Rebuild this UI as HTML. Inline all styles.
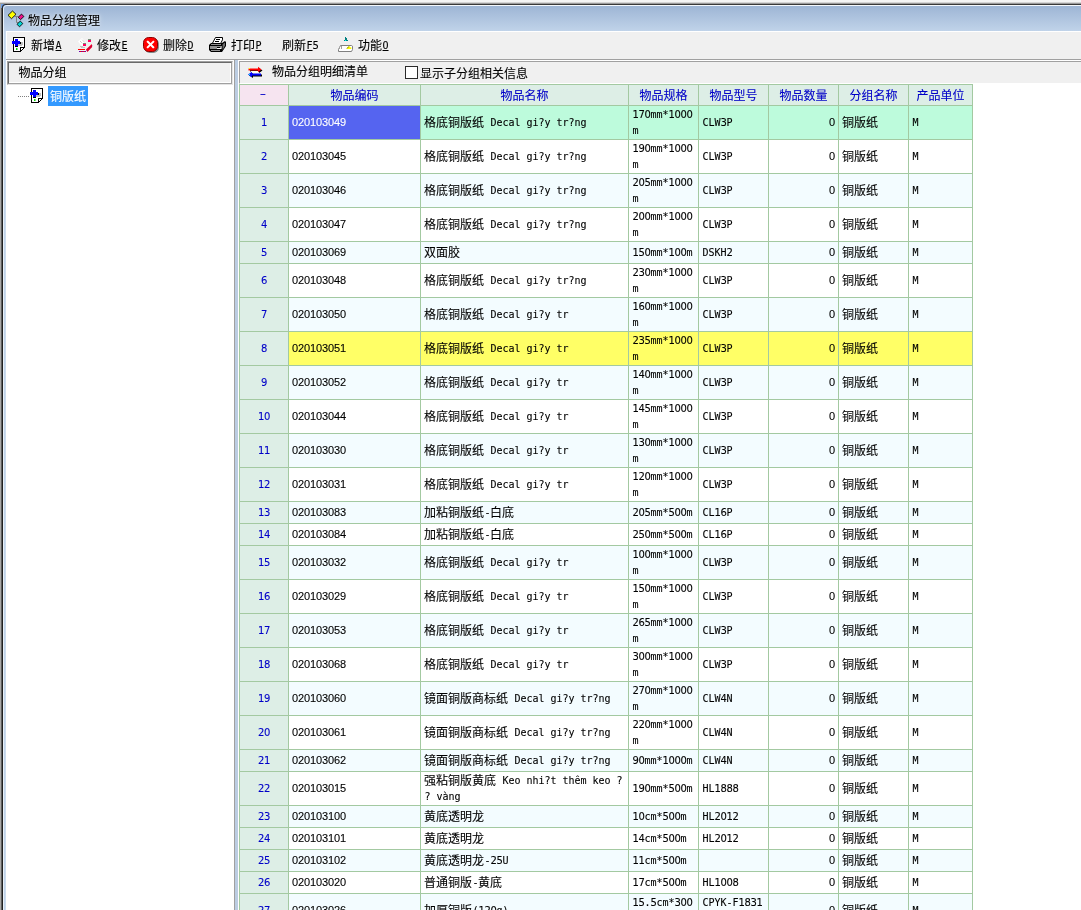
<!DOCTYPE html><html lang="zh"><head><meta charset="utf-8"><title>物品分组管理</title><style>
html,body{margin:0;padding:0}
body{width:1081px;height:910px;overflow:hidden;position:relative;background:#f0f0f0;
 font-family:"Liberation Mono","Noto Sans CJK SC",monospace;font-size:12px;line-height:14px;color:#000;-webkit-text-stroke:0.1px}
div,span{box-sizing:border-box}
#app{position:absolute;left:0;top:0;width:1081px;height:910px;overflow:hidden;will-change:transform}
.a{position:absolute}
.t{position:absolute;white-space:nowrap;font-size:12px;line-height:14px}
i{font-style:normal;font-family:"DejaVu Sans Mono",monospace;font-size:10px;letter-spacing:-0.02px;position:relative;top:-1px;left:0.5px;line-height:0}
i.d{font-family:"DejaVu Sans",sans-serif;letter-spacing:-0.36px}
.n{font-family:"Liberation Sans",sans-serif;font-size:11px;letter-spacing:-0.12px}
.c{position:absolute;overflow:hidden;white-space:nowrap}
.h{color:#0000c8;text-align:center}
.rn{color:#0000c8;text-align:center;padding-right:1px}
u{text-decoration:underline;text-decoration-thickness:1px;text-underline-offset:1px}
svg{position:absolute;overflow:visible}
</style></head><body><div id="app">
<div class="a" style="left:0;top:0;width:1081px;height:2px;background:#f4f4f4"></div>
<div class="a" style="left:0;top:2px;width:1081px;height:1px;background:#d4d4d4"></div>
<div class="a" style="left:0;top:3px;width:1081px;height:1px;background:#9a9a9a"></div>
<div class="a" style="left:0;top:4px;width:1px;height:906px;background:#a8a8a8"></div>
<div class="a" style="left:1px;top:4px;width:1080px;height:1px;background:#383838"></div>
<div class="a" style="left:1px;top:4px;width:1px;height:906px;background:#606060"></div>
<div class="a" style="left:2px;top:4px;width:1px;height:906px;background:#202020"></div>
<div class="a" style="left:3px;top:5px;width:1078px;height:26px;background:linear-gradient(#9cb4d4,#c0d3e9)"></div>
<div class="a" style="left:3px;top:5px;width:1078px;height:1px;background:#f4f8fc"></div>
<div class="a" style="left:3px;top:31px;width:3px;height:879px;background:linear-gradient(90deg,#dfe9f5,#bdd0e7 40%,#cfdff0)"></div>
<div class="a" style="left:3px;top:6px;width:1px;height:904px;background:#e8f0f8"></div>
<div class="t" style="left:28px;top:15px;text-shadow:0 0 3px rgba(255,255,255,.75),0 0 6px rgba(255,255,255,.5)">物品分组管理</div>
<div class="a" style="left:6px;top:31px;width:1075px;height:28px;background:#f0f0f0;border-top:1px solid #fff;border-left:1px solid #fff"></div>
<div class="a" style="left:6px;top:59px;width:1075px;height:1px;background:#a0a0a0"></div>
<div class="a" style="left:6px;top:60px;width:1075px;height:1px;background:#fff"></div>
<div class="t" style="left:31px;top:40px">新增<i><u>A</u></i></div>
<div class="t" style="left:97px;top:40px">修改<i><u>E</u></i></div>
<div class="t" style="left:163px;top:40px">删除<i><u>D</u></i></div>
<div class="t" style="left:231px;top:40px">打印<i><u>P</u></i></div>
<div class="t" style="left:282px;top:40px">刷新<i><u>F</u></i><i class="d">5</i></div>
<div class="t" style="left:358px;top:40px">功能<i><u>O</u></i></div>
<div class="a" style="left:6px;top:61px;width:228px;height:849px;background:#fff"></div>
<div class="a" style="left:7px;top:61px;width:226px;height:24px;background:#f0f0f0;border:1px solid #a0a0a0;border-right-color:#e4e4e4;border-bottom-color:#e4e4e4"><div class="a" style="left:0;top:0;right:0;bottom:0;border:1px solid #696969;border-right-color:#a0a0a0;border-bottom-color:#a0a0a0"><div class="a" style="left:0;top:0;right:0;bottom:0;border-right:1px solid #fff;border-bottom:1px solid #fff"></div></div></div>
<div class="t" style="left:18.5px;top:67px">物品分组</div>
<div class="a" style="left:48px;top:86px;width:40px;height:20px;background:#3399ff"></div>
<div class="t" style="left:50px;top:91px;color:#fff">铜版纸</div>
<div class="a" style="left:234px;top:60px;width:1px;height:850px;background:#a0a0a0"></div>
<div class="a" style="left:235px;top:60px;width:3px;height:850px;background:#bccde2"></div>
<div class="a" style="left:238px;top:61px;width:1px;height:849px;background:#fff"></div>
<div class="a" style="left:239px;top:61px;width:842px;height:23px;background:#f0f0f0;border-top:1px solid #a0a0a0;border-left:1px solid #a0a0a0;border-bottom:1px solid #fff"></div>
<div class="t" style="left:272px;top:66px">物品分组明细清单</div>
<div class="a" style="left:405px;top:66px;width:13px;height:13px;background:#fff;border:1px solid #2a2a2a"></div>
<div class="t" style="left:420px;top:68px">显示子分组相关信息</div>
<div class="a" style="left:239px;top:84px;width:842px;height:826px;background:#fff"></div>
<div class="a" style="left:239px;top:84px;width:734px;height:826px;background:#a3c9a1"></div>
<div class="c h" style="left:240px;top:85px;width:48px;height:20px;background:#f6e4f0;line-height:24px"><i style="display:inline-block;transform:scaleX(1.8);top:-3px;left:-1px">-</i></div>
<div class="c h" style="left:289px;top:85px;width:131px;height:20px;background:#ddeee6;line-height:24px">物品编码</div>
<div class="c h" style="left:421px;top:85px;width:207px;height:20px;background:#ddeee6;line-height:24px">物品名称</div>
<div class="c h" style="left:629px;top:85px;width:69px;height:20px;background:#ddeee6;line-height:24px">物品规格</div>
<div class="c h" style="left:699px;top:85px;width:69px;height:20px;background:#ddeee6;line-height:24px">物品型号</div>
<div class="c h" style="left:769px;top:85px;width:69px;height:20px;background:#ddeee6;line-height:24px">物品数量</div>
<div class="c h" style="left:839px;top:85px;width:69px;height:20px;background:#ddeee6;line-height:24px">分组名称</div>
<div class="c h" style="left:909px;top:85px;width:63px;height:20px;background:#ddeee6;line-height:24px">产品单位</div>
<div class="c rn" style="left:240px;top:106px;width:48px;height:33px;background:#ddeee6;line-height:37px"><i class="d">1</i></div>
<div class="c n" style="left:289px;top:106px;width:131px;height:33px;background:#5564f0;line-height:33px;padding-left:3px;color:#fff;">020103049</div>
<div class="c " style="left:421px;top:106px;width:207px;height:33px;background:#bdfbdc;line-height:37px;padding-left:3px;">格底铜版纸<i> Decal gi?y tr?ng</i></div>
<div class="c" style="left:629px;top:106px;width:69px;height:33px;background:#bdfbdc;line-height:16px;padding:2px 0 0 3px;white-space:normal"><i class="d">170</i><i>mm*</i><i class="d">1000</i><br><i>m</i></div>
<div class="c " style="left:699px;top:106px;width:69px;height:33px;background:#bdfbdc;line-height:37px;padding-left:3px;"><i>CLW</i><i class="d">3</i><i>P</i></div>
<div class="c n" style="left:769px;top:106px;width:69px;height:33px;background:#bdfbdc;line-height:33px;padding-left:3px;text-align:right;padding-right:3px;padding-left:0;">0</div>
<div class="c " style="left:839px;top:106px;width:69px;height:33px;background:#bdfbdc;line-height:37px;padding-left:3px;">铜版纸</div>
<div class="c " style="left:909px;top:106px;width:63px;height:33px;background:#bdfbdc;line-height:37px;padding-left:3px;"><i>M</i></div>
<div class="c rn" style="left:240px;top:140px;width:48px;height:33px;background:#ddeee6;line-height:37px"><i class="d">2</i></div>
<div class="c n" style="left:289px;top:140px;width:131px;height:33px;background:#ffffff;line-height:33px;padding-left:3px;">020103045</div>
<div class="c " style="left:421px;top:140px;width:207px;height:33px;background:#ffffff;line-height:37px;padding-left:3px;">格底铜版纸<i> Decal gi?y tr?ng</i></div>
<div class="c" style="left:629px;top:140px;width:69px;height:33px;background:#ffffff;line-height:16px;padding:2px 0 0 3px;white-space:normal"><i class="d">190</i><i>mm*</i><i class="d">1000</i><br><i>m</i></div>
<div class="c " style="left:699px;top:140px;width:69px;height:33px;background:#ffffff;line-height:37px;padding-left:3px;"><i>CLW</i><i class="d">3</i><i>P</i></div>
<div class="c n" style="left:769px;top:140px;width:69px;height:33px;background:#ffffff;line-height:33px;padding-left:3px;text-align:right;padding-right:3px;padding-left:0;">0</div>
<div class="c " style="left:839px;top:140px;width:69px;height:33px;background:#ffffff;line-height:37px;padding-left:3px;">铜版纸</div>
<div class="c " style="left:909px;top:140px;width:63px;height:33px;background:#ffffff;line-height:37px;padding-left:3px;"><i>M</i></div>
<div class="c rn" style="left:240px;top:174px;width:48px;height:33px;background:#ddeee6;line-height:37px"><i class="d">3</i></div>
<div class="c n" style="left:289px;top:174px;width:131px;height:33px;background:#f3fcff;line-height:33px;padding-left:3px;">020103046</div>
<div class="c " style="left:421px;top:174px;width:207px;height:33px;background:#f3fcff;line-height:37px;padding-left:3px;">格底铜版纸<i> Decal gi?y tr?ng</i></div>
<div class="c" style="left:629px;top:174px;width:69px;height:33px;background:#f3fcff;line-height:16px;padding:2px 0 0 3px;white-space:normal"><i class="d">205</i><i>mm*</i><i class="d">1000</i><br><i>m</i></div>
<div class="c " style="left:699px;top:174px;width:69px;height:33px;background:#f3fcff;line-height:37px;padding-left:3px;"><i>CLW</i><i class="d">3</i><i>P</i></div>
<div class="c n" style="left:769px;top:174px;width:69px;height:33px;background:#f3fcff;line-height:33px;padding-left:3px;text-align:right;padding-right:3px;padding-left:0;">0</div>
<div class="c " style="left:839px;top:174px;width:69px;height:33px;background:#f3fcff;line-height:37px;padding-left:3px;">铜版纸</div>
<div class="c " style="left:909px;top:174px;width:63px;height:33px;background:#f3fcff;line-height:37px;padding-left:3px;"><i>M</i></div>
<div class="c rn" style="left:240px;top:208px;width:48px;height:33px;background:#ddeee6;line-height:37px"><i class="d">4</i></div>
<div class="c n" style="left:289px;top:208px;width:131px;height:33px;background:#ffffff;line-height:33px;padding-left:3px;">020103047</div>
<div class="c " style="left:421px;top:208px;width:207px;height:33px;background:#ffffff;line-height:37px;padding-left:3px;">格底铜版纸<i> Decal gi?y tr?ng</i></div>
<div class="c" style="left:629px;top:208px;width:69px;height:33px;background:#ffffff;line-height:16px;padding:2px 0 0 3px;white-space:normal"><i class="d">200</i><i>mm*</i><i class="d">1000</i><br><i>m</i></div>
<div class="c " style="left:699px;top:208px;width:69px;height:33px;background:#ffffff;line-height:37px;padding-left:3px;"><i>CLW</i><i class="d">3</i><i>P</i></div>
<div class="c n" style="left:769px;top:208px;width:69px;height:33px;background:#ffffff;line-height:33px;padding-left:3px;text-align:right;padding-right:3px;padding-left:0;">0</div>
<div class="c " style="left:839px;top:208px;width:69px;height:33px;background:#ffffff;line-height:37px;padding-left:3px;">铜版纸</div>
<div class="c " style="left:909px;top:208px;width:63px;height:33px;background:#ffffff;line-height:37px;padding-left:3px;"><i>M</i></div>
<div class="c rn" style="left:240px;top:242px;width:48px;height:21px;background:#ddeee6;line-height:25px"><i class="d">5</i></div>
<div class="c n" style="left:289px;top:242px;width:131px;height:21px;background:#f3fcff;line-height:21px;padding-left:3px;">020103069</div>
<div class="c " style="left:421px;top:242px;width:207px;height:21px;background:#f3fcff;line-height:25px;padding-left:3px;">双面胶</div>
<div class="c " style="left:629px;top:242px;width:69px;height:21px;background:#f3fcff;line-height:25px;padding-left:3px;"><i class="d">150</i><i>mm*</i><i class="d">100</i><i>m</i></div>
<div class="c " style="left:699px;top:242px;width:69px;height:21px;background:#f3fcff;line-height:25px;padding-left:3px;"><i>DSKH</i><i class="d">2</i></div>
<div class="c n" style="left:769px;top:242px;width:69px;height:21px;background:#f3fcff;line-height:21px;padding-left:3px;text-align:right;padding-right:3px;padding-left:0;">0</div>
<div class="c " style="left:839px;top:242px;width:69px;height:21px;background:#f3fcff;line-height:25px;padding-left:3px;">铜版纸</div>
<div class="c " style="left:909px;top:242px;width:63px;height:21px;background:#f3fcff;line-height:25px;padding-left:3px;"><i>M</i></div>
<div class="c rn" style="left:240px;top:264px;width:48px;height:33px;background:#ddeee6;line-height:37px"><i class="d">6</i></div>
<div class="c n" style="left:289px;top:264px;width:131px;height:33px;background:#ffffff;line-height:33px;padding-left:3px;">020103048</div>
<div class="c " style="left:421px;top:264px;width:207px;height:33px;background:#ffffff;line-height:37px;padding-left:3px;">格底铜版纸<i> Decal gi?y tr?ng</i></div>
<div class="c" style="left:629px;top:264px;width:69px;height:33px;background:#ffffff;line-height:16px;padding:2px 0 0 3px;white-space:normal"><i class="d">230</i><i>mm*</i><i class="d">1000</i><br><i>m</i></div>
<div class="c " style="left:699px;top:264px;width:69px;height:33px;background:#ffffff;line-height:37px;padding-left:3px;"><i>CLW</i><i class="d">3</i><i>P</i></div>
<div class="c n" style="left:769px;top:264px;width:69px;height:33px;background:#ffffff;line-height:33px;padding-left:3px;text-align:right;padding-right:3px;padding-left:0;">0</div>
<div class="c " style="left:839px;top:264px;width:69px;height:33px;background:#ffffff;line-height:37px;padding-left:3px;">铜版纸</div>
<div class="c " style="left:909px;top:264px;width:63px;height:33px;background:#ffffff;line-height:37px;padding-left:3px;"><i>M</i></div>
<div class="c rn" style="left:240px;top:298px;width:48px;height:33px;background:#ddeee6;line-height:37px"><i class="d">7</i></div>
<div class="c n" style="left:289px;top:298px;width:131px;height:33px;background:#f3fcff;line-height:33px;padding-left:3px;">020103050</div>
<div class="c " style="left:421px;top:298px;width:207px;height:33px;background:#f3fcff;line-height:37px;padding-left:3px;">格底铜版纸<i> Decal gi?y tr</i></div>
<div class="c" style="left:629px;top:298px;width:69px;height:33px;background:#f3fcff;line-height:16px;padding:2px 0 0 3px;white-space:normal"><i class="d">160</i><i>mm*</i><i class="d">1000</i><br><i>m</i></div>
<div class="c " style="left:699px;top:298px;width:69px;height:33px;background:#f3fcff;line-height:37px;padding-left:3px;"><i>CLW</i><i class="d">3</i><i>P</i></div>
<div class="c n" style="left:769px;top:298px;width:69px;height:33px;background:#f3fcff;line-height:33px;padding-left:3px;text-align:right;padding-right:3px;padding-left:0;">0</div>
<div class="c " style="left:839px;top:298px;width:69px;height:33px;background:#f3fcff;line-height:37px;padding-left:3px;">铜版纸</div>
<div class="c " style="left:909px;top:298px;width:63px;height:33px;background:#f3fcff;line-height:37px;padding-left:3px;"><i>M</i></div>
<div class="c rn" style="left:240px;top:332px;width:48px;height:33px;background:#ddeee6;line-height:37px"><i class="d">8</i></div>
<div class="c n" style="left:289px;top:332px;width:131px;height:33px;background:#ffff66;line-height:33px;padding-left:3px;">020103051</div>
<div class="c " style="left:421px;top:332px;width:207px;height:33px;background:#ffff66;line-height:37px;padding-left:3px;">格底铜版纸<i> Decal gi?y tr</i></div>
<div class="c" style="left:629px;top:332px;width:69px;height:33px;background:#ffff66;line-height:16px;padding:2px 0 0 3px;white-space:normal"><i class="d">235</i><i>mm*</i><i class="d">1000</i><br><i>m</i></div>
<div class="c " style="left:699px;top:332px;width:69px;height:33px;background:#ffff66;line-height:37px;padding-left:3px;"><i>CLW</i><i class="d">3</i><i>P</i></div>
<div class="c n" style="left:769px;top:332px;width:69px;height:33px;background:#ffff66;line-height:33px;padding-left:3px;text-align:right;padding-right:3px;padding-left:0;">0</div>
<div class="c " style="left:839px;top:332px;width:69px;height:33px;background:#ffff66;line-height:37px;padding-left:3px;">铜版纸</div>
<div class="c " style="left:909px;top:332px;width:63px;height:33px;background:#ffff66;line-height:37px;padding-left:3px;"><i>M</i></div>
<div class="c rn" style="left:240px;top:366px;width:48px;height:33px;background:#ddeee6;line-height:37px"><i class="d">9</i></div>
<div class="c n" style="left:289px;top:366px;width:131px;height:33px;background:#f3fcff;line-height:33px;padding-left:3px;">020103052</div>
<div class="c " style="left:421px;top:366px;width:207px;height:33px;background:#f3fcff;line-height:37px;padding-left:3px;">格底铜版纸<i> Decal gi?y tr</i></div>
<div class="c" style="left:629px;top:366px;width:69px;height:33px;background:#f3fcff;line-height:16px;padding:2px 0 0 3px;white-space:normal"><i class="d">140</i><i>mm*</i><i class="d">1000</i><br><i>m</i></div>
<div class="c " style="left:699px;top:366px;width:69px;height:33px;background:#f3fcff;line-height:37px;padding-left:3px;"><i>CLW</i><i class="d">3</i><i>P</i></div>
<div class="c n" style="left:769px;top:366px;width:69px;height:33px;background:#f3fcff;line-height:33px;padding-left:3px;text-align:right;padding-right:3px;padding-left:0;">0</div>
<div class="c " style="left:839px;top:366px;width:69px;height:33px;background:#f3fcff;line-height:37px;padding-left:3px;">铜版纸</div>
<div class="c " style="left:909px;top:366px;width:63px;height:33px;background:#f3fcff;line-height:37px;padding-left:3px;"><i>M</i></div>
<div class="c rn" style="left:240px;top:400px;width:48px;height:33px;background:#ddeee6;line-height:37px"><i class="d">10</i></div>
<div class="c n" style="left:289px;top:400px;width:131px;height:33px;background:#ffffff;line-height:33px;padding-left:3px;">020103044</div>
<div class="c " style="left:421px;top:400px;width:207px;height:33px;background:#ffffff;line-height:37px;padding-left:3px;">格底铜版纸<i> Decal gi?y tr</i></div>
<div class="c" style="left:629px;top:400px;width:69px;height:33px;background:#ffffff;line-height:16px;padding:2px 0 0 3px;white-space:normal"><i class="d">145</i><i>mm*</i><i class="d">1000</i><br><i>m</i></div>
<div class="c " style="left:699px;top:400px;width:69px;height:33px;background:#ffffff;line-height:37px;padding-left:3px;"><i>CLW</i><i class="d">3</i><i>P</i></div>
<div class="c n" style="left:769px;top:400px;width:69px;height:33px;background:#ffffff;line-height:33px;padding-left:3px;text-align:right;padding-right:3px;padding-left:0;">0</div>
<div class="c " style="left:839px;top:400px;width:69px;height:33px;background:#ffffff;line-height:37px;padding-left:3px;">铜版纸</div>
<div class="c " style="left:909px;top:400px;width:63px;height:33px;background:#ffffff;line-height:37px;padding-left:3px;"><i>M</i></div>
<div class="c rn" style="left:240px;top:434px;width:48px;height:33px;background:#ddeee6;line-height:37px"><i class="d">11</i></div>
<div class="c n" style="left:289px;top:434px;width:131px;height:33px;background:#f3fcff;line-height:33px;padding-left:3px;">020103030</div>
<div class="c " style="left:421px;top:434px;width:207px;height:33px;background:#f3fcff;line-height:37px;padding-left:3px;">格底铜版纸<i> Decal gi?y tr</i></div>
<div class="c" style="left:629px;top:434px;width:69px;height:33px;background:#f3fcff;line-height:16px;padding:2px 0 0 3px;white-space:normal"><i class="d">130</i><i>mm*</i><i class="d">1000</i><br><i>m</i></div>
<div class="c " style="left:699px;top:434px;width:69px;height:33px;background:#f3fcff;line-height:37px;padding-left:3px;"><i>CLW</i><i class="d">3</i><i>P</i></div>
<div class="c n" style="left:769px;top:434px;width:69px;height:33px;background:#f3fcff;line-height:33px;padding-left:3px;text-align:right;padding-right:3px;padding-left:0;">0</div>
<div class="c " style="left:839px;top:434px;width:69px;height:33px;background:#f3fcff;line-height:37px;padding-left:3px;">铜版纸</div>
<div class="c " style="left:909px;top:434px;width:63px;height:33px;background:#f3fcff;line-height:37px;padding-left:3px;"><i>M</i></div>
<div class="c rn" style="left:240px;top:468px;width:48px;height:33px;background:#ddeee6;line-height:37px"><i class="d">12</i></div>
<div class="c n" style="left:289px;top:468px;width:131px;height:33px;background:#ffffff;line-height:33px;padding-left:3px;">020103031</div>
<div class="c " style="left:421px;top:468px;width:207px;height:33px;background:#ffffff;line-height:37px;padding-left:3px;">格底铜版纸<i> Decal gi?y tr</i></div>
<div class="c" style="left:629px;top:468px;width:69px;height:33px;background:#ffffff;line-height:16px;padding:2px 0 0 3px;white-space:normal"><i class="d">120</i><i>mm*</i><i class="d">1000</i><br><i>m</i></div>
<div class="c " style="left:699px;top:468px;width:69px;height:33px;background:#ffffff;line-height:37px;padding-left:3px;"><i>CLW</i><i class="d">3</i><i>P</i></div>
<div class="c n" style="left:769px;top:468px;width:69px;height:33px;background:#ffffff;line-height:33px;padding-left:3px;text-align:right;padding-right:3px;padding-left:0;">0</div>
<div class="c " style="left:839px;top:468px;width:69px;height:33px;background:#ffffff;line-height:37px;padding-left:3px;">铜版纸</div>
<div class="c " style="left:909px;top:468px;width:63px;height:33px;background:#ffffff;line-height:37px;padding-left:3px;"><i>M</i></div>
<div class="c rn" style="left:240px;top:502px;width:48px;height:21px;background:#ddeee6;line-height:25px"><i class="d">13</i></div>
<div class="c n" style="left:289px;top:502px;width:131px;height:21px;background:#f3fcff;line-height:21px;padding-left:3px;">020103083</div>
<div class="c " style="left:421px;top:502px;width:207px;height:21px;background:#f3fcff;line-height:25px;padding-left:3px;">加粘铜版纸<i>-</i>白底</div>
<div class="c " style="left:629px;top:502px;width:69px;height:21px;background:#f3fcff;line-height:25px;padding-left:3px;"><i class="d">205</i><i>mm*</i><i class="d">500</i><i>m</i></div>
<div class="c " style="left:699px;top:502px;width:69px;height:21px;background:#f3fcff;line-height:25px;padding-left:3px;"><i>CL</i><i class="d">16</i><i>P</i></div>
<div class="c n" style="left:769px;top:502px;width:69px;height:21px;background:#f3fcff;line-height:21px;padding-left:3px;text-align:right;padding-right:3px;padding-left:0;">0</div>
<div class="c " style="left:839px;top:502px;width:69px;height:21px;background:#f3fcff;line-height:25px;padding-left:3px;">铜版纸</div>
<div class="c " style="left:909px;top:502px;width:63px;height:21px;background:#f3fcff;line-height:25px;padding-left:3px;"><i>M</i></div>
<div class="c rn" style="left:240px;top:524px;width:48px;height:21px;background:#ddeee6;line-height:25px"><i class="d">14</i></div>
<div class="c n" style="left:289px;top:524px;width:131px;height:21px;background:#ffffff;line-height:21px;padding-left:3px;">020103084</div>
<div class="c " style="left:421px;top:524px;width:207px;height:21px;background:#ffffff;line-height:25px;padding-left:3px;">加粘铜版纸<i>-</i>白底</div>
<div class="c " style="left:629px;top:524px;width:69px;height:21px;background:#ffffff;line-height:25px;padding-left:3px;"><i class="d">250</i><i>mm*</i><i class="d">500</i><i>m</i></div>
<div class="c " style="left:699px;top:524px;width:69px;height:21px;background:#ffffff;line-height:25px;padding-left:3px;"><i>CL</i><i class="d">16</i><i>P</i></div>
<div class="c n" style="left:769px;top:524px;width:69px;height:21px;background:#ffffff;line-height:21px;padding-left:3px;text-align:right;padding-right:3px;padding-left:0;">0</div>
<div class="c " style="left:839px;top:524px;width:69px;height:21px;background:#ffffff;line-height:25px;padding-left:3px;">铜版纸</div>
<div class="c " style="left:909px;top:524px;width:63px;height:21px;background:#ffffff;line-height:25px;padding-left:3px;"><i>M</i></div>
<div class="c rn" style="left:240px;top:546px;width:48px;height:33px;background:#ddeee6;line-height:37px"><i class="d">15</i></div>
<div class="c n" style="left:289px;top:546px;width:131px;height:33px;background:#f3fcff;line-height:33px;padding-left:3px;">020103032</div>
<div class="c " style="left:421px;top:546px;width:207px;height:33px;background:#f3fcff;line-height:37px;padding-left:3px;">格底铜版纸<i> Decal gi?y tr</i></div>
<div class="c" style="left:629px;top:546px;width:69px;height:33px;background:#f3fcff;line-height:16px;padding:2px 0 0 3px;white-space:normal"><i class="d">100</i><i>mm*</i><i class="d">1000</i><br><i>m</i></div>
<div class="c " style="left:699px;top:546px;width:69px;height:33px;background:#f3fcff;line-height:37px;padding-left:3px;"><i>CLW</i><i class="d">3</i><i>P</i></div>
<div class="c n" style="left:769px;top:546px;width:69px;height:33px;background:#f3fcff;line-height:33px;padding-left:3px;text-align:right;padding-right:3px;padding-left:0;">0</div>
<div class="c " style="left:839px;top:546px;width:69px;height:33px;background:#f3fcff;line-height:37px;padding-left:3px;">铜版纸</div>
<div class="c " style="left:909px;top:546px;width:63px;height:33px;background:#f3fcff;line-height:37px;padding-left:3px;"><i>M</i></div>
<div class="c rn" style="left:240px;top:580px;width:48px;height:33px;background:#ddeee6;line-height:37px"><i class="d">16</i></div>
<div class="c n" style="left:289px;top:580px;width:131px;height:33px;background:#ffffff;line-height:33px;padding-left:3px;">020103029</div>
<div class="c " style="left:421px;top:580px;width:207px;height:33px;background:#ffffff;line-height:37px;padding-left:3px;">格底铜版纸<i> Decal gi?y tr</i></div>
<div class="c" style="left:629px;top:580px;width:69px;height:33px;background:#ffffff;line-height:16px;padding:2px 0 0 3px;white-space:normal"><i class="d">150</i><i>mm*</i><i class="d">1000</i><br><i>m</i></div>
<div class="c " style="left:699px;top:580px;width:69px;height:33px;background:#ffffff;line-height:37px;padding-left:3px;"><i>CLW</i><i class="d">3</i><i>P</i></div>
<div class="c n" style="left:769px;top:580px;width:69px;height:33px;background:#ffffff;line-height:33px;padding-left:3px;text-align:right;padding-right:3px;padding-left:0;">0</div>
<div class="c " style="left:839px;top:580px;width:69px;height:33px;background:#ffffff;line-height:37px;padding-left:3px;">铜版纸</div>
<div class="c " style="left:909px;top:580px;width:63px;height:33px;background:#ffffff;line-height:37px;padding-left:3px;"><i>M</i></div>
<div class="c rn" style="left:240px;top:614px;width:48px;height:33px;background:#ddeee6;line-height:37px"><i class="d">17</i></div>
<div class="c n" style="left:289px;top:614px;width:131px;height:33px;background:#f3fcff;line-height:33px;padding-left:3px;">020103053</div>
<div class="c " style="left:421px;top:614px;width:207px;height:33px;background:#f3fcff;line-height:37px;padding-left:3px;">格底铜版纸<i> Decal gi?y tr</i></div>
<div class="c" style="left:629px;top:614px;width:69px;height:33px;background:#f3fcff;line-height:16px;padding:2px 0 0 3px;white-space:normal"><i class="d">265</i><i>mm*</i><i class="d">1000</i><br><i>m</i></div>
<div class="c " style="left:699px;top:614px;width:69px;height:33px;background:#f3fcff;line-height:37px;padding-left:3px;"><i>CLW</i><i class="d">3</i><i>P</i></div>
<div class="c n" style="left:769px;top:614px;width:69px;height:33px;background:#f3fcff;line-height:33px;padding-left:3px;text-align:right;padding-right:3px;padding-left:0;">0</div>
<div class="c " style="left:839px;top:614px;width:69px;height:33px;background:#f3fcff;line-height:37px;padding-left:3px;">铜版纸</div>
<div class="c " style="left:909px;top:614px;width:63px;height:33px;background:#f3fcff;line-height:37px;padding-left:3px;"><i>M</i></div>
<div class="c rn" style="left:240px;top:648px;width:48px;height:33px;background:#ddeee6;line-height:37px"><i class="d">18</i></div>
<div class="c n" style="left:289px;top:648px;width:131px;height:33px;background:#ffffff;line-height:33px;padding-left:3px;">020103068</div>
<div class="c " style="left:421px;top:648px;width:207px;height:33px;background:#ffffff;line-height:37px;padding-left:3px;">格底铜版纸<i> Decal gi?y tr</i></div>
<div class="c" style="left:629px;top:648px;width:69px;height:33px;background:#ffffff;line-height:16px;padding:2px 0 0 3px;white-space:normal"><i class="d">300</i><i>mm*</i><i class="d">1000</i><br><i>m</i></div>
<div class="c " style="left:699px;top:648px;width:69px;height:33px;background:#ffffff;line-height:37px;padding-left:3px;"><i>CLW</i><i class="d">3</i><i>P</i></div>
<div class="c n" style="left:769px;top:648px;width:69px;height:33px;background:#ffffff;line-height:33px;padding-left:3px;text-align:right;padding-right:3px;padding-left:0;">0</div>
<div class="c " style="left:839px;top:648px;width:69px;height:33px;background:#ffffff;line-height:37px;padding-left:3px;">铜版纸</div>
<div class="c " style="left:909px;top:648px;width:63px;height:33px;background:#ffffff;line-height:37px;padding-left:3px;"><i>M</i></div>
<div class="c rn" style="left:240px;top:682px;width:48px;height:33px;background:#ddeee6;line-height:37px"><i class="d">19</i></div>
<div class="c n" style="left:289px;top:682px;width:131px;height:33px;background:#f3fcff;line-height:33px;padding-left:3px;">020103060</div>
<div class="c " style="left:421px;top:682px;width:207px;height:33px;background:#f3fcff;line-height:37px;padding-left:3px;">镜面铜版商标纸<i> Decal gi?y tr?ng</i></div>
<div class="c" style="left:629px;top:682px;width:69px;height:33px;background:#f3fcff;line-height:16px;padding:2px 0 0 3px;white-space:normal"><i class="d">270</i><i>mm*</i><i class="d">1000</i><br><i>m</i></div>
<div class="c " style="left:699px;top:682px;width:69px;height:33px;background:#f3fcff;line-height:37px;padding-left:3px;"><i>CLW</i><i class="d">4</i><i>N</i></div>
<div class="c n" style="left:769px;top:682px;width:69px;height:33px;background:#f3fcff;line-height:33px;padding-left:3px;text-align:right;padding-right:3px;padding-left:0;">0</div>
<div class="c " style="left:839px;top:682px;width:69px;height:33px;background:#f3fcff;line-height:37px;padding-left:3px;">铜版纸</div>
<div class="c " style="left:909px;top:682px;width:63px;height:33px;background:#f3fcff;line-height:37px;padding-left:3px;"><i>M</i></div>
<div class="c rn" style="left:240px;top:716px;width:48px;height:33px;background:#ddeee6;line-height:37px"><i class="d">20</i></div>
<div class="c n" style="left:289px;top:716px;width:131px;height:33px;background:#ffffff;line-height:33px;padding-left:3px;">020103061</div>
<div class="c " style="left:421px;top:716px;width:207px;height:33px;background:#ffffff;line-height:37px;padding-left:3px;">镜面铜版商标纸<i> Decal gi?y tr?ng</i></div>
<div class="c" style="left:629px;top:716px;width:69px;height:33px;background:#ffffff;line-height:16px;padding:2px 0 0 3px;white-space:normal"><i class="d">220</i><i>mm*</i><i class="d">1000</i><br><i>m</i></div>
<div class="c " style="left:699px;top:716px;width:69px;height:33px;background:#ffffff;line-height:37px;padding-left:3px;"><i>CLW</i><i class="d">4</i><i>N</i></div>
<div class="c n" style="left:769px;top:716px;width:69px;height:33px;background:#ffffff;line-height:33px;padding-left:3px;text-align:right;padding-right:3px;padding-left:0;">0</div>
<div class="c " style="left:839px;top:716px;width:69px;height:33px;background:#ffffff;line-height:37px;padding-left:3px;">铜版纸</div>
<div class="c " style="left:909px;top:716px;width:63px;height:33px;background:#ffffff;line-height:37px;padding-left:3px;"><i>M</i></div>
<div class="c rn" style="left:240px;top:750px;width:48px;height:21px;background:#ddeee6;line-height:25px"><i class="d">21</i></div>
<div class="c n" style="left:289px;top:750px;width:131px;height:21px;background:#f3fcff;line-height:21px;padding-left:3px;">020103062</div>
<div class="c " style="left:421px;top:750px;width:207px;height:21px;background:#f3fcff;line-height:25px;padding-left:3px;">镜面铜版商标纸<i> Decal gi?y tr?ng</i></div>
<div class="c " style="left:629px;top:750px;width:69px;height:21px;background:#f3fcff;line-height:25px;padding-left:3px;"><i class="d">90</i><i>mm*</i><i class="d">1000</i><i>m</i></div>
<div class="c " style="left:699px;top:750px;width:69px;height:21px;background:#f3fcff;line-height:25px;padding-left:3px;"><i>CLW</i><i class="d">4</i><i>N</i></div>
<div class="c n" style="left:769px;top:750px;width:69px;height:21px;background:#f3fcff;line-height:21px;padding-left:3px;text-align:right;padding-right:3px;padding-left:0;">0</div>
<div class="c " style="left:839px;top:750px;width:69px;height:21px;background:#f3fcff;line-height:25px;padding-left:3px;">铜版纸</div>
<div class="c " style="left:909px;top:750px;width:63px;height:21px;background:#f3fcff;line-height:25px;padding-left:3px;"><i>M</i></div>
<div class="c rn" style="left:240px;top:772px;width:48px;height:33px;background:#ddeee6;line-height:37px"><i class="d">22</i></div>
<div class="c n" style="left:289px;top:772px;width:131px;height:33px;background:#ffffff;line-height:33px;padding-left:3px;">020103015</div>
<div class="c" style="left:421px;top:772px;width:207px;height:33px;background:#ffffff;line-height:16px;padding:2px 0 0 3px;white-space:normal">强粘铜版黄底<i> Keo nhi?t thêm keo ?</i><br><i>? vàng</i></div>
<div class="c " style="left:629px;top:772px;width:69px;height:33px;background:#ffffff;line-height:37px;padding-left:3px;"><i class="d">190</i><i>mm*</i><i class="d">500</i><i>m</i></div>
<div class="c " style="left:699px;top:772px;width:69px;height:33px;background:#ffffff;line-height:37px;padding-left:3px;"><i>HL</i><i class="d">1888</i></div>
<div class="c n" style="left:769px;top:772px;width:69px;height:33px;background:#ffffff;line-height:33px;padding-left:3px;text-align:right;padding-right:3px;padding-left:0;">0</div>
<div class="c " style="left:839px;top:772px;width:69px;height:33px;background:#ffffff;line-height:37px;padding-left:3px;">铜版纸</div>
<div class="c " style="left:909px;top:772px;width:63px;height:33px;background:#ffffff;line-height:37px;padding-left:3px;"><i>M</i></div>
<div class="c rn" style="left:240px;top:806px;width:48px;height:21px;background:#ddeee6;line-height:25px"><i class="d">23</i></div>
<div class="c n" style="left:289px;top:806px;width:131px;height:21px;background:#f3fcff;line-height:21px;padding-left:3px;">020103100</div>
<div class="c " style="left:421px;top:806px;width:207px;height:21px;background:#f3fcff;line-height:25px;padding-left:3px;">黄底透明龙</div>
<div class="c " style="left:629px;top:806px;width:69px;height:21px;background:#f3fcff;line-height:25px;padding-left:3px;"><i class="d">10</i><i>cm*</i><i class="d">500</i><i>m</i></div>
<div class="c " style="left:699px;top:806px;width:69px;height:21px;background:#f3fcff;line-height:25px;padding-left:3px;"><i>HL</i><i class="d">2012</i></div>
<div class="c n" style="left:769px;top:806px;width:69px;height:21px;background:#f3fcff;line-height:21px;padding-left:3px;text-align:right;padding-right:3px;padding-left:0;">0</div>
<div class="c " style="left:839px;top:806px;width:69px;height:21px;background:#f3fcff;line-height:25px;padding-left:3px;">铜版纸</div>
<div class="c " style="left:909px;top:806px;width:63px;height:21px;background:#f3fcff;line-height:25px;padding-left:3px;"><i>M</i></div>
<div class="c rn" style="left:240px;top:828px;width:48px;height:21px;background:#ddeee6;line-height:25px"><i class="d">24</i></div>
<div class="c n" style="left:289px;top:828px;width:131px;height:21px;background:#ffffff;line-height:21px;padding-left:3px;">020103101</div>
<div class="c " style="left:421px;top:828px;width:207px;height:21px;background:#ffffff;line-height:25px;padding-left:3px;">黄底透明龙</div>
<div class="c " style="left:629px;top:828px;width:69px;height:21px;background:#ffffff;line-height:25px;padding-left:3px;"><i class="d">14</i><i>cm*</i><i class="d">500</i><i>m</i></div>
<div class="c " style="left:699px;top:828px;width:69px;height:21px;background:#ffffff;line-height:25px;padding-left:3px;"><i>HL</i><i class="d">2012</i></div>
<div class="c n" style="left:769px;top:828px;width:69px;height:21px;background:#ffffff;line-height:21px;padding-left:3px;text-align:right;padding-right:3px;padding-left:0;">0</div>
<div class="c " style="left:839px;top:828px;width:69px;height:21px;background:#ffffff;line-height:25px;padding-left:3px;">铜版纸</div>
<div class="c " style="left:909px;top:828px;width:63px;height:21px;background:#ffffff;line-height:25px;padding-left:3px;"><i>M</i></div>
<div class="c rn" style="left:240px;top:850px;width:48px;height:21px;background:#ddeee6;line-height:25px"><i class="d">25</i></div>
<div class="c n" style="left:289px;top:850px;width:131px;height:21px;background:#f3fcff;line-height:21px;padding-left:3px;">020103102</div>
<div class="c " style="left:421px;top:850px;width:207px;height:21px;background:#f3fcff;line-height:25px;padding-left:3px;">黄底透明龙<i>-</i><i class="d">25</i><i>U</i></div>
<div class="c " style="left:629px;top:850px;width:69px;height:21px;background:#f3fcff;line-height:25px;padding-left:3px;"><i class="d">11</i><i>cm*</i><i class="d">500</i><i>m</i></div>
<div class="c " style="left:699px;top:850px;width:69px;height:21px;background:#f3fcff;line-height:25px;padding-left:3px;"></div>
<div class="c n" style="left:769px;top:850px;width:69px;height:21px;background:#f3fcff;line-height:21px;padding-left:3px;text-align:right;padding-right:3px;padding-left:0;">0</div>
<div class="c " style="left:839px;top:850px;width:69px;height:21px;background:#f3fcff;line-height:25px;padding-left:3px;">铜版纸</div>
<div class="c " style="left:909px;top:850px;width:63px;height:21px;background:#f3fcff;line-height:25px;padding-left:3px;"><i>M</i></div>
<div class="c rn" style="left:240px;top:872px;width:48px;height:21px;background:#ddeee6;line-height:25px"><i class="d">26</i></div>
<div class="c n" style="left:289px;top:872px;width:131px;height:21px;background:#ffffff;line-height:21px;padding-left:3px;">020103020</div>
<div class="c " style="left:421px;top:872px;width:207px;height:21px;background:#ffffff;line-height:25px;padding-left:3px;">普通铜版<i>-</i>黄底</div>
<div class="c " style="left:629px;top:872px;width:69px;height:21px;background:#ffffff;line-height:25px;padding-left:3px;"><i class="d">17</i><i>cm*</i><i class="d">500</i><i>m</i></div>
<div class="c " style="left:699px;top:872px;width:69px;height:21px;background:#ffffff;line-height:25px;padding-left:3px;"><i>HL</i><i class="d">1008</i></div>
<div class="c n" style="left:769px;top:872px;width:69px;height:21px;background:#ffffff;line-height:21px;padding-left:3px;text-align:right;padding-right:3px;padding-left:0;">0</div>
<div class="c " style="left:839px;top:872px;width:69px;height:21px;background:#ffffff;line-height:25px;padding-left:3px;">铜版纸</div>
<div class="c " style="left:909px;top:872px;width:63px;height:21px;background:#ffffff;line-height:25px;padding-left:3px;"><i>M</i></div>
<div class="c rn" style="left:240px;top:894px;width:48px;height:33px;background:#ddeee6;line-height:37px"><i class="d">27</i></div>
<div class="c n" style="left:289px;top:894px;width:131px;height:33px;background:#f3fcff;line-height:33px;padding-left:3px;">020103026</div>
<div class="c " style="left:421px;top:894px;width:207px;height:33px;background:#f3fcff;line-height:37px;padding-left:3px;">加厚铜版<i>(</i><i class="d">120</i><i>g)</i></div>
<div class="c" style="left:629px;top:894px;width:69px;height:33px;background:#f3fcff;line-height:16px;padding:2px 0 0 3px;white-space:normal"><i class="d">15</i><i>.</i><i class="d">5</i><i>cm*</i><i class="d">300</i><br><i>m</i></div>
<div class="c" style="left:699px;top:894px;width:69px;height:33px;background:#f3fcff;line-height:16px;padding:2px 0 0 3px;white-space:normal"><i>CPYK-F</i><i class="d">1831</i><br><i>A</i></div>
<div class="c n" style="left:769px;top:894px;width:69px;height:33px;background:#f3fcff;line-height:33px;padding-left:3px;text-align:right;padding-right:3px;padding-left:0;">0</div>
<div class="c " style="left:839px;top:894px;width:69px;height:33px;background:#f3fcff;line-height:37px;padding-left:3px;">铜版纸</div>
<div class="c " style="left:909px;top:894px;width:63px;height:33px;background:#f3fcff;line-height:37px;padding-left:3px;"><i>M</i></div>
<svg width="1081" height="910" viewBox="0 0 1081 910" style="left:0;top:0" shape-rendering="crispEdges"><g shape-rendering="auto"><rect x="1" y="4" width="5" height="4" fill="#6e9fe6"/><path d="M2.5,9V8A3.5,3.5 0 0 1 6,4.5H7" fill="none" stroke="#2a2a2a" stroke-width="1.2"/><path d="M3.5,9V8.5A3,3 0 0 1 6.5,5.5H7.5V9Z" fill="#a3bad8"/><path d="M3.5,9V8.5A3,3 0 0 1 6.5,5.5H8" fill="none" stroke="#eef4fa" stroke-width="1"/></g><g shape-rendering="auto"><path d="M14.5,16.5H18.5M16.5,16.5V22.5H18.5" fill="none" stroke="#808080" stroke-width="1"/><polygon points="8,15.3 12.5,11 16,14.3 11.5,18.7" fill="#ffff00" stroke="#000" stroke-width="1" stroke-opacity="0.85"/><polygon points="18.2,17.3 21.5,14.1 23.9,16.5 20.6,19.6" fill="#f0108c" stroke="#000" stroke-width="1" stroke-opacity="0.85"/><polygon points="17,24.3 20.3,21.1 22.8,23.6 19.5,26.8" fill="#00d8d8" stroke="#000" stroke-width="1" stroke-opacity="0.85"/></g><polygon points="14,38 24,38 24,48 21,51 14,51" fill="#fff"/><rect x="13" y="37" width="12" height="1" fill="#000"/><rect x="13" y="37" width="1" height="15" fill="#000"/><rect x="24" y="37" width="1" height="11" fill="#000"/><rect x="13" y="51" width="8" height="1" fill="#000"/><rect x="20" y="47" width="5" height="1" fill="#000"/><rect x="20" y="47" width="1" height="4" fill="#000"/><rect x="23" y="48" width="1" height="1" fill="#000"/><rect x="22" y="49" width="1" height="1" fill="#000"/><rect x="21" y="50" width="1" height="1" fill="#000"/><rect x="21" y="42" width="2" height="3" fill="#c0c0c0"/><rect x="18" y="44" width="4" height="2" fill="#c0c0c0"/><rect x="15" y="46" width="3" height="1" fill="#000"/><rect x="20" y="42" width="1" height="2" fill="#000"/><rect x="15" y="39" width="3" height="7" fill="#0000ff"/><rect x="12" y="41" width="8" height="3" fill="#0000ff"/><rect x="16" y="48" width="1" height="2" fill="#00e000"/><rect x="17" y="48" width="1" height="2" fill="#7fe87f"/><polygon points="32,89 42,89 42,99 39,102 32,102" fill="#fff"/><rect x="31" y="88" width="12" height="1" fill="#000"/><rect x="31" y="88" width="1" height="15" fill="#000"/><rect x="42" y="88" width="1" height="11" fill="#000"/><rect x="31" y="102" width="8" height="1" fill="#000"/><rect x="38" y="98" width="5" height="1" fill="#000"/><rect x="38" y="98" width="1" height="4" fill="#000"/><rect x="41" y="99" width="1" height="1" fill="#000"/><rect x="40" y="100" width="1" height="1" fill="#000"/><rect x="39" y="101" width="1" height="1" fill="#000"/><rect x="39" y="93" width="2" height="3" fill="#c0c0c0"/><rect x="36" y="95" width="4" height="2" fill="#c0c0c0"/><rect x="33" y="97" width="3" height="1" fill="#000"/><rect x="38" y="93" width="1" height="2" fill="#000"/><rect x="33" y="90" width="3" height="7" fill="#0000ff"/><rect x="30" y="92" width="8" height="3" fill="#0000ff"/><rect x="34" y="99" width="1" height="2" fill="#00e000"/><rect x="35" y="99" width="1" height="2" fill="#7fe87f"/><rect x="18" y="96" width="1" height="1" fill="#808080"/><rect x="20" y="96" width="1" height="1" fill="#808080"/><rect x="22" y="96" width="1" height="1" fill="#808080"/><rect x="24" y="96" width="1" height="1" fill="#808080"/><rect x="26" y="96" width="1" height="1" fill="#808080"/><rect x="28" y="96" width="1" height="1" fill="#808080"/><g shape-rendering="auto"><polygon points="78,41.5 82,38 86.5,43 82,46.5" fill="#fff"/><path d="M80.3,41.3L82.6,43.6M82.3,39.8L84.8,42.4" stroke="#b4b4b4" stroke-width="1" stroke-dasharray="1,0.6"/><polygon points="86,49.6 91.8,44 92.2,47 87.4,52" fill="#f00018"/><path d="M87,50.6L92,45.6" stroke="#6a00b0" stroke-width="1" stroke-dasharray="1,1"/></g><rect x="88" y="39" width="3" height="1" fill="#7a8f7a"/><rect x="88" y="40" width="3" height="2" fill="#ff0060"/><rect x="83" y="43" width="3" height="1" fill="#7a8f7a"/><rect x="83" y="44" width="3" height="2" fill="#ff0060"/><rect x="80" y="46" width="3" height="1" fill="#c4c4c4"/><rect x="81" y="47" width="4" height="1" fill="#c4c4c4"/><rect x="78" y="49" width="7" height="1" fill="#ff0000"/><rect x="79" y="51" width="7" height="1" fill="#ff0000"/><rect x="79" y="51" width="1" height="1" fill="#6a00b0"/><rect x="81" y="51" width="1" height="1" fill="#6a00b0"/><rect x="83" y="51" width="1" height="1" fill="#6a00b0"/><rect x="85" y="51" width="1" height="1" fill="#6a00b0"/><g shape-rendering="auto"><rect x="144.3" y="38.3" width="14.6" height="14.6" rx="5.5" fill="#808a8a"/><rect x="143.5" y="37.5" width="14" height="14" rx="5.2" fill="#ff0000" stroke="#8c0000" stroke-width="1"/><path d="M147.8,41.8L153.2,47.2M153.2,41.8L147.8,47.2" stroke="#fff" stroke-width="2" stroke-linecap="square"/></g><g shape-rendering="auto"><polygon points="211,43 222,43 225,41 226,42 226,46 222,52 211,52 209,50 209,45" fill="#000"/><polygon points="222.6,44.2 225,42.6 225,45.6 222.6,50" fill="#6c6c6c"/><polygon points="215.5,37.5 222.5,37.5 222.5,39.8 220.6,43.5 212.3,43.5" fill="#fff" stroke="#000" stroke-width="1"/></g><rect x="216" y="39" width="4" height="1" fill="#000"/><rect x="215" y="41" width="4" height="1" fill="#000"/><rect x="211" y="44" width="10" height="1" fill="#909090"/><rect x="210" y="46" width="12" height="3" fill="#909090"/><rect x="211" y="50" width="9" height="1" fill="#909090"/><rect x="217" y="47" width="3" height="1" fill="#000"/><rect x="217" y="48" width="4" height="1" fill="#fff"/><rect x="345" y="37" width="1" height="1" fill="#008080"/><rect x="345" y="38" width="2" height="2" fill="#008080"/><rect x="344" y="40" width="4" height="1" fill="#008080"/><rect x="345" y="40" width="1" height="1" fill="#00ffff"/><g shape-rendering="auto"><polygon points="340.5,45.5 351.5,45.5 352.5,46.2 352.5,49.5 351.5,51.5 338.5,51.5 338.5,49.5" fill="#fff" stroke="#808080" stroke-width="1"/><polygon points="346.5,49 348.5,46.3 349.5,46.3 350,47.3 351.3,47.3 351.3,49" fill="#ffff00"/><path d="M347,48.5L348.8,46.5" stroke="#808000" stroke-width="1"/></g><rect x="339" y="47" width="1" height="2" fill="#a0a0a0"/><rect x="341" y="46" width="1" height="3" fill="#a0a0a0"/><g shape-rendering="auto"><polygon points="250,69.5 259,69.5 259,68 262.5,70.5 259,73 259,71.5 250,71.5" fill="#000"/><polygon points="262,74.5 253,74.5 253,73 249,75.5 253,78 253,76.5 262,76.5" fill="#000"/><rect x="251" y="71" width="7" height="2" fill="#fffff0"/><polygon points="248.5,68.5 258,68.5 258,66.8 261.5,69.5 258,72.2 258,70.5 248.5,70.5" fill="#ff0000"/><polygon points="261,73.5 252,73.5 252,71.8 248,74.5 252,77.2 252,75.5 261,75.5" fill="#0000ff"/></g><rect x="249" y="68" width="1" height="1" fill="#ffff00"/><rect x="249" y="74" width="1" height="1" fill="#00ffff"/></svg>
</div></body></html>
